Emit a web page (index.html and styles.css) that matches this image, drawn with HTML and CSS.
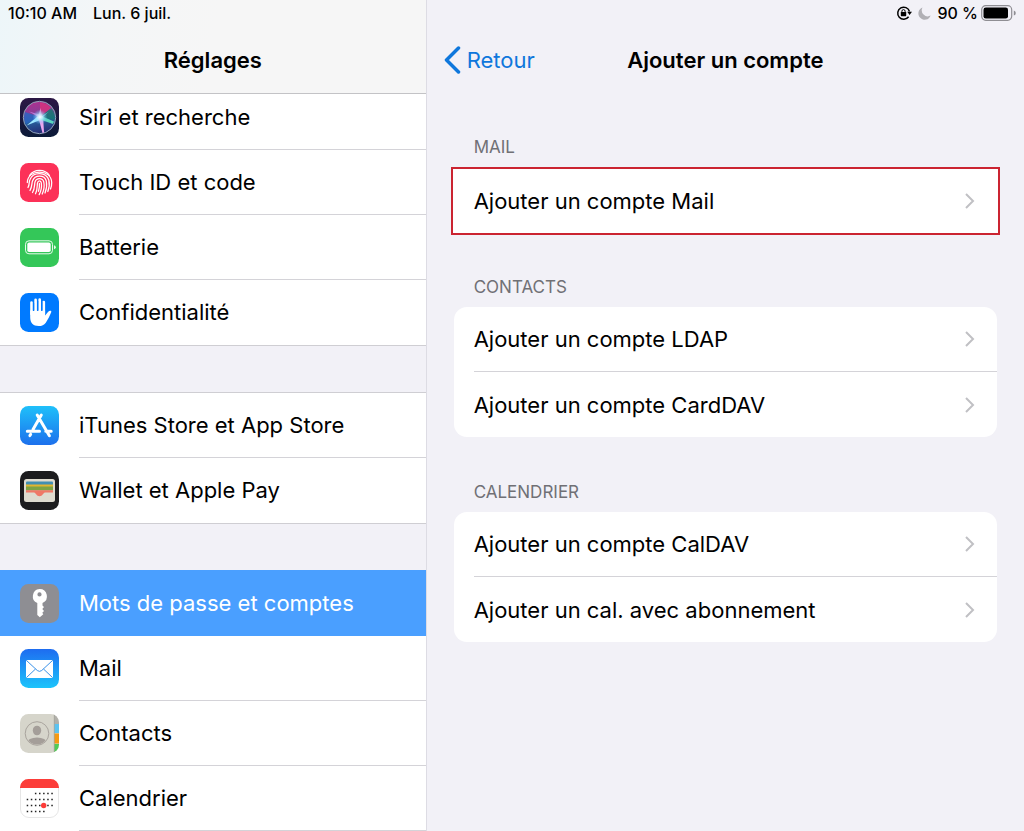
FILE: index.html
```html
<!DOCTYPE html>
<html lang="fr">
<head>
    <meta charset="UTF-8">
    <meta name="viewport" content="width=device-width, initial-scale=1.0">
    <title>Réglages</title>
    <link rel="stylesheet" href="styles.css">
</head>
<body>
    <div class="app">
        <aside class="sidebar">
            <header class="sidebar-header">
                <div class="status">
                    <span>10:10 AM</span>
                    <span>Lun. 6 juil.</span>
                </div>
                <div class="titlebar">
                    <h1 class="title">Réglages</h1>
                </div>
            </header>

            <nav class="menu">
                <ul class="menu-list menu-list-scrolled">
                    <li><a class="menu-item" href="#">
                        <svg class="icon" viewBox="0 0 39 39" aria-hidden="true">
                            <defs>
                                <linearGradient id="siriBg" x1="0" y1="0" x2="0" y2="1">
                                    <stop offset="0" stop-color="#2c1745"/>
                                    <stop offset="1" stop-color="#0b1a38"/>
                                </linearGradient>
                                <linearGradient id="siriOrb" x1="0.3" y1="0" x2="0.5" y2="1">
                                    <stop offset="0" stop-color="#b0308f"/>
                                    <stop offset="0.35" stop-color="#8a3c96"/>
                                    <stop offset="0.6" stop-color="#285f9c"/>
                                    <stop offset="1" stop-color="#242a72"/>
                                </linearGradient>
                                <radialGradient id="siriGlow">
                                    <stop offset="0" stop-color="#fff"/>
                                    <stop offset="0.35" stop-color="#c8f0ff" stop-opacity="0.8"/>
                                    <stop offset="1" stop-color="#5ab4ff" stop-opacity="0"/>
                                </radialGradient>
                            </defs>
                            <rect width="39" height="39" rx="8.5" fill="url(#siriBg)"/>
                            <circle cx="19.5" cy="19.5" r="16.2" fill="url(#siriOrb)" stroke="#8fa3b8" stroke-width="1"/>
                            <path d="M20 19L31 10A15 15 0 0 1 34.500 22Z" fill="#167a70" opacity="0.8"/>
                            <path d="M20 19L5 14A15 15 0 0 0 6 26Z" fill="#2567c4" opacity="0.8"/>
                            <path d="M20 19L20 4.500A15 15 0 0 1 31 10Z" fill="#d8327c" opacity="0.8"/>
                            <path d="M20 16.500L6.500 27.500L21.500 21.500Z" fill="#9fe8ff"/>
                            <path d="M18 18L22.500 35L24 34.500L23 18Z" fill="#e9a6ee"/>
                            <path d="M19 17L34 23.500L33 26L20 21.500Z" fill="#5fe3c2" opacity="0.9"/>
                            <path d="M18 19L20.500 10L22 19Z" fill="#f3a5dc" opacity="0.8"/>
                            <path d="M20 20L9 13.500L21 17Z" fill="#c987e8" opacity="0.8"/>
                            <path d="M19 20L29 13.500L22 20Z" fill="#8fd6e8" opacity="0.7"/>
                            <circle cx="20" cy="19" r="7.500" fill="url(#siriGlow)"/>
                        </svg>
                        <span class="menu-label">Siri et recherche</span>
                    </a></li>
                    <li><a class="menu-item" href="#">
                        <svg class="icon" viewBox="0 0 39 39" aria-hidden="true">
                            <rect width="39" height="39" rx="8.5" fill="#fc3158"/>
                            <g fill="none" stroke="#fff" stroke-width="1.250" stroke-linecap="round">
                                <path d="M9.500 12.500C14 5.500 25 5.500 29.500 12.500"/>
                                <path d="M7.300 19.500C7.500 5.500 31.500 5.500 31.700 19.500C31.800 22 31.300 24 30.500 26"/>
                                <path d="M8 24.500C10 20.500 8.500 19.500 10 16.500C13.500 8.500 26 8.800 28.800 17C29.600 20.500 29.200 25 27.800 28.500"/>
                                <path d="M10 27.500C12.500 23 11.500 20.500 12.500 18C15 11.500 24.500 11.800 26.300 18C27 21.500 26.400 26.500 25 30"/>
                                <path d="M12.500 29.500C15 25.500 14.300 21.500 15 19C16.500 14.500 22.700 14.700 23.800 19C24.500 22.500 23.800 27.500 22.200 31"/>
                                <path d="M15.500 30.800C17.700 27 17 22 17.500 19.800C18.200 17 20.900 17.200 21.300 19.800C21.800 23 21 28 19.200 31.600"/>
                                <path d="M19.400 20.500C19.700 23.500 19.200 26 18.500 28.300"/>
                            </g>
                        </svg>
                        <span class="menu-label">Touch ID et code</span>
                    </a></li>
                    <li><a class="menu-item" href="#">
                        <svg class="icon" viewBox="0 0 39 39" aria-hidden="true">
                            <rect width="39" height="39" rx="8.5" fill="#34c759"/>
                            <rect x="5.500" y="12.800" width="27" height="13" rx="3.500" fill="none" stroke="#e9faed" stroke-width="1"/>
                            <rect x="7.300" y="14.600" width="23.400" height="9.400" rx="1.800" fill="#fff"/>
                            <path d="M34 17.300q1.800 .5 1.800 2t-1.800 2z" fill="#e9faed"/>
                        </svg>
                        <span class="menu-label">Batterie</span>
                    </a></li>
                    <li><a class="menu-item" href="#">
                        <svg class="icon" viewBox="0 0 39 39" aria-hidden="true">
                            <rect width="39" height="39" rx="8.5" fill="#007aff"/>
                            <path d="M11.500 21V9.500M15.600 20V6.800M19.700 20V6.500M23.800 21V9" fill="none" stroke="#fff" stroke-width="2.600" stroke-linecap="round"/>
                            <path d="M10.200 17.500H25.100V22.500L28.200 18.700C29.500 17.300 31.700 17.700 31.300 19C29.900 22.800 27.700 26.700 25.800 29.700C24 32.300 21.900 33 18.700 33C13 33 10.200 29.500 10.200 24.500Z" fill="#fff"/>
                            <path d="M13.550 10V18M17.650 8V18M21.750 9V18" stroke="#007aff" stroke-width="1.200"/>
                        </svg>
                        <span class="menu-label">Confidentialité</span>
                    </a></li>
                </ul>

                <ul class="menu-list menu-list-middle">
                    <li><a class="menu-item" href="#">
                        <svg class="icon" viewBox="0 0 39 39" aria-hidden="true">
                            <defs>
                                <linearGradient id="storeBg" x1="0" y1="0" x2="0" y2="1">
                                    <stop offset="0" stop-color="#1fc0fa"/>
                                    <stop offset="1" stop-color="#1d70ec"/>
                                </linearGradient>
                            </defs>
                            <rect width="39" height="39" rx="8.5" fill="url(#storeBg)"/>
                            <g fill="none" stroke="#fff" stroke-width="3" stroke-linecap="round">
                                <path d="M21.300 9L13 23.500M17.200 9L29.400 29.700M7.300 25.200H19.500M25.800 25.200H31.200M10.700 28.200L9.900 29.600"/>
                            </g>
                        </svg>
                        <span class="menu-label">iTunes Store et App Store</span>
                    </a></li>
                    <li><a class="menu-item" href="#">
                        <svg class="icon" viewBox="0 0 39 39" aria-hidden="true">
                            <rect width="39" height="39" rx="8.5" fill="#1c1c1e"/>
                            <rect x="4" y="8" width="31" height="23" rx="2.500" fill="#dedbcf"/>
                            <rect x="6" y="10.500" width="27" height="4" rx="1" fill="#418fb2"/>
                            <rect x="6" y="13.500" width="27" height="3" fill="#e1b530"/>
                            <rect x="6" y="15.500" width="27" height="4" fill="#7da344"/>
                            <path d="M6 19.200H33V21.500H25C23 22 22.500 25.200 19.500 25.200S16 22 14 21.500H6Z" fill="#ef7867"/>
                        </svg>
                        <span class="menu-label">Wallet et Apple Pay</span>
                    </a></li>
                </ul>

                <ul class="menu-list menu-list-last">
                    <li><a class="menu-item menu-item-selected" href="#" aria-current="page">
                        <svg class="icon" viewBox="0 0 39 39" aria-hidden="true">
                            <rect width="39" height="39" rx="8.5" fill="#8e8e93"/>
                            <path fill="#fff" fill-rule="evenodd" d="M19.500 5A7.300 7.300 0 0 1 22.500 19V21.500L24 23L22.300 25L24 27L22.300 28.800L23.300 30.300L19.800 33.300L17.300 31V19A7.300 7.300 0 0 1 19.500 5ZM19.500 8.300A2.100 2.100 0 1 0 19.500 12.500A2.100 2.100 0 0 0 19.500 8.300Z"/>
                        </svg>
                        <span class="menu-label">Mots de passe et comptes</span>
                    </a></li>
                    <li><a class="menu-item" href="#">
                        <svg class="icon" viewBox="0 0 39 39" aria-hidden="true">
                            <defs>
                                <linearGradient id="mailBg" x1="0" y1="0" x2="0" y2="1">
                                    <stop offset="0" stop-color="#1e6cf0"/>
                                    <stop offset="1" stop-color="#1cc4fb"/>
                                </linearGradient>
                            </defs>
                            <rect width="39" height="39" rx="8.5" fill="url(#mailBg)"/>
                            <rect x="6" y="11" width="27" height="18" rx="1.500" fill="#fff"/>
                            <path d="M6.500 11.500L17.300 21.500Q19.500 23.300 21.700 21.500L32.500 11.500M6.500 28.500L15.500 20M32.500 28.500L23.500 20" fill="none" stroke="#3b92e8" stroke-width="1"/>
                        </svg>
                        <span class="menu-label">Mail</span>
                    </a></li>
                    <li><a class="menu-item" href="#">
                        <svg class="icon" viewBox="0 0 39 39" aria-hidden="true">
                            <defs>
                                <clipPath id="contactsClip"><rect width="39" height="39" rx="8.5"/></clipPath>
                                <clipPath id="faceClip"><circle cx="17" cy="19.500" r="11"/></clipPath>
                            </defs>
                            <g clip-path="url(#contactsClip)">
                                <rect width="39" height="39" fill="#d6d5cb"/>
                                <rect x="34" width="5" height="10" fill="#b1b0aa"/>
                                <rect x="34" y="10" width="5" height="9" fill="#5bc3f0"/>
                                <rect x="34" y="19.500" width="5" height="10" fill="#f59a12"/>
                                <rect x="34" y="30" width="5" height="9" fill="#50cc57"/>
                                <path d="M34.300 0V39" stroke="#a3a39a" stroke-width="0.800"/>
                                <g clip-path="url(#faceClip)" fill="#a49e99">
                                    <ellipse cx="17" cy="16.500" rx="4.200" ry="4.800"/>
                                    <ellipse cx="17" cy="29" rx="10" ry="5.500"/>
                                </g>
                                <circle cx="17" cy="19.500" r="11.800" fill="none" stroke="#a49e99" stroke-width="0.900"/>
                            </g>
                        </svg>
                        <span class="menu-label">Contacts</span>
                    </a></li>
                    <li><a class="menu-item" href="#">
                        <svg class="icon" viewBox="0 0 39 39" aria-hidden="true">
                            <rect x="0.500" y="0.500" width="38" height="38" rx="8.500" fill="#fff" stroke="#e6e6e6"/>
                            <path d="M0 9V8.500A8.500 8.500 0 0 1 8.500 0H30.500A8.500 8.500 0 0 1 39 8.500V9Z" fill="#fc3d39"/>
                            <g fill="none" stroke="#222" stroke-width="1.500" stroke-dasharray="1.500 2.600">
                                <path d="M14.900 14.500H33M6.700 20.500H33M6.700 26.500H33M6.700 32.500H25"/>
                            </g>
                            <circle cx="23.700" cy="26.500" r="2.700" fill="#fc3d39"/>
                        </svg>
                        <span class="menu-label">Calendrier</span>
                    </a></li>
                </ul>
            </nav>
        </aside>

        <main class="content">
            <header class="content-header">
                <div class="status status-right">
                    <svg class="status-lock" viewBox="0 0 16 16" aria-hidden="true">
                        <path d="M12.600 11.700A6 6 0 1 1 13.500 6.500" fill="none" stroke="#000" stroke-width="1.500"/>
                        <path d="M11.200 6.800H16L13.600 10Z"/>
                        <rect x="4.800" y="7" width="5.400" height="4.200" rx="0.600"/>
                        <path d="M5.900 7.500V6.200A1.600 1.600 0 0 1 9.100 6.200V7.500" fill="none" stroke="#000"/>
                    </svg>
                    <svg class="status-moon" viewBox="0 0 13 13" aria-hidden="true">
                        <path d="M4.500 .5A6.300 6.300 0 1 0 12.600 8.600A6 6 0 0 1 4.500 .5Z" fill="#b1b0b5"/>
                    </svg>
                    <span class="status-level">90 %
                        <svg class="status-battery" viewBox="0 0 35 16" aria-hidden="true">
                            <rect x="0.700" y="0.700" width="30" height="14.600" rx="4" fill="none" stroke="#8f8e93" stroke-width="1.200"/>
                            <rect x="2.500" y="2.500" width="24.500" height="11" rx="2.300"/>
                            <path d="M32.800 5.500Q34.800 6 34.800 8T32.800 10.500Z" fill="#8f8e93"/>
                        </svg>
                    </span>
                </div>
                <div class="titlebar">
                    <a class="back" href="#">
                        <svg class="back-arrow" viewBox="0 0 17 28" aria-hidden="true">
                            <path d="M14.500 2L2.500 14L14.500 26" fill="none" stroke="currentColor" stroke-width="3.500" stroke-linecap="round" stroke-linejoin="round"/>
                        </svg>
                        Retour
                    </a>
                    <h2 class="title">Ajouter un compte</h2>
                </div>
            </header>

            <div class="groups">
                <section>
                    <h3 class="group-title">MAIL</h3>
                    <div class="card card-highlighted">
                        <a class="card-item" href="#">Ajouter un compte Mail
                            <svg class="chevron" viewBox="0 0 11 18" aria-hidden="true"><path d="M2 2L9 9L2 16"/></svg>
                        </a>
                    </div>
                </section>

                <section>
                    <h3 class="group-title">CONTACTS</h3>
                    <div class="card">
                        <a class="card-item" href="#">Ajouter un compte LDAP
                            <svg class="chevron" viewBox="0 0 11 18" aria-hidden="true"><path d="M2 2L9 9L2 16"/></svg>
                        </a>
                        <a class="card-item" href="#">Ajouter un compte CardDAV
                            <svg class="chevron" viewBox="0 0 11 18" aria-hidden="true"><path d="M2 2L9 9L2 16"/></svg>
                        </a>
                    </div>
                </section>

                <section>
                    <h3 class="group-title">CALENDRIER</h3>
                    <div class="card">
                        <a class="card-item" href="#">Ajouter un compte CalDAV
                            <svg class="chevron" viewBox="0 0 11 18" aria-hidden="true"><path d="M2 2L9 9L2 16"/></svg>
                        </a>
                        <a class="card-item" href="#">Ajouter un cal. avec abonnement
                            <svg class="chevron" viewBox="0 0 11 18" aria-hidden="true"><path d="M2 2L9 9L2 16"/></svg>
                        </a>
                    </div>
                </section>
            </div>
        </main>
    </div>
</body>
</html>
```
FILE: styles.css
```css
* {
    box-sizing: border-box;
}

body {
    margin: 0;
    background-color: #f2f1f7;
    color: #000000;
    font-family: Inter, "Liberation Sans", sans-serif;
    font-size: 22px;
    line-height: 28px;
}

a {
    color: inherit;
    text-decoration: none;
}

ul {
    list-style: none;
    margin: 0;
    padding: 0;
}

.app {
    display: grid;
    grid-template-columns: 5fr 7fr;
    min-height: 100vh;
}

/* Headers */
.sidebar-header,
.content-header {
    height: 94px;
}

.sidebar-header {
    position: relative;
    z-index: 1;
    background: linear-gradient(100deg, #edf6f9 0%, #f4f6f7 25%, #f6f6f6 50%, #f6f6f6 100%);
    border-bottom: 1px solid #c3c3c6;
}

.status {
    display: flex;
    align-items: center;
    gap: 16px;
    height: 26px;
    padding: 0 8px;
    font-size: 16px;
    font-weight: 500;
}

.status-right {
    justify-content: flex-end;
    gap: 6px;
}

.status-level {
    display: flex;
    align-items: center;
    gap: 3px;
}

.status-lock {
    width: 16px;
    height: 16px;
}

.status-moon {
    width: 13px;
    height: 13px;
}

.status-battery {
    width: 35px;
    height: 16px;
}

.titlebar {
    position: relative;
    display: flex;
    align-items: center;
    justify-content: center;
    height: 68px;
}

.title {
    margin: 0;
    font-size: 22px;
    font-weight: 600;
}

.back {
    position: absolute;
    left: 17px;
    display: flex;
    align-items: center;
    gap: 6px;
    color: #0f77dc;
}

.back-arrow {
    width: 17px;
    height: 28px;
}

/* Sidebar */
.sidebar {
    border-right: 1px solid #dddce4;
}

.menu {
    display: flex;
    flex-direction: column;
    gap: 46px;
}

.menu-list {
    background-color: #ffffff;
    border-bottom: 1px solid #cfced3;
}

/* the first row is partly scrolled under the header */
.menu-list-scrolled {
    margin-top: -9px;
}

.menu-list-middle {
    border-top: 1px solid #cfced3;
}

.menu-list-last {
    border-bottom: none;
}

.menu-item {
    display: flex;
    align-items: center;
    gap: 20px;
    height: 65px;
    padding-left: 20px;
}

.icon {
    flex: none;
    width: 39px;
    height: 39px;
}

.menu-label {
    flex: 1;
    line-height: 64px;
    border-bottom: 1px solid #d4d3d8;
}

.menu-list:not(.menu-list-last) li:last-child .menu-label,
.menu-item-selected .menu-label {
    border-bottom-color: transparent;
}

.menu-item-selected {
    height: 66px;
    background-color: #4a9fff;
    color: #ffffff;
}

/* Content */
.groups {
    display: flex;
    flex-direction: column;
    gap: 45px;
    padding: 43px 27px;
}

.group-title {
    margin: 0 20px 10px;
    color: #707075;
    font-size: 17px;
    font-weight: 400;
    line-height: 20px;
}

.card {
    background-color: #ffffff;
    border-radius: 13px;
    padding-left: 20px;
}

.card-highlighted {
    margin: 0 -3px -3px;
    padding-left: 21px;
    padding-right: 1px;
    border: 2px solid #cb2431;
    border-radius: 0;
}

.card-item {
    display: flex;
    align-items: center;
    justify-content: space-between;
    height: 65px;
    padding-right: 22px;
}

.card-item:not(:last-child) {
    border-bottom: 1px solid #d4d3d8;
}

.card-highlighted .card-item {
    height: 64px;
}

.chevron {
    width: 11px;
    height: 18px;
    fill: none;
    stroke: #c0c0c4;
    stroke-width: 2;
}
```
